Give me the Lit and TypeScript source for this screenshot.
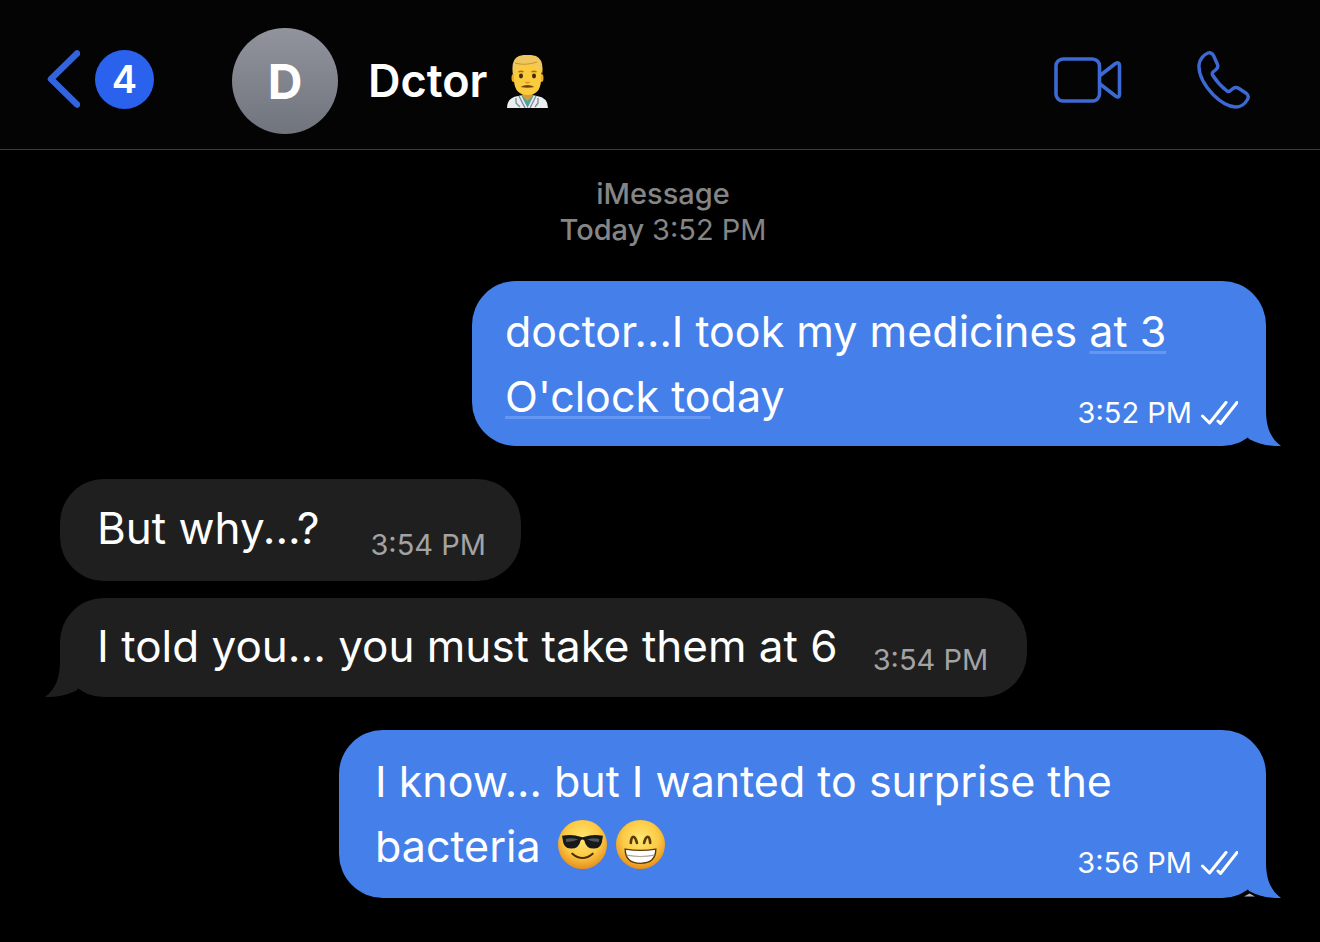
import { LitElement, html, css, svg, nothing } from "lit";
import { customElement, property } from "lit/decorators.js";

const coolFace = html`<svg class="emoji" viewBox="0 0 48 48" role="img" aria-label="smiling face with sunglasses">
  <defs>
    <radialGradient id="cool" cx="50%" cy="38%" r="62%">
      <stop offset="0" stop-color="#ffe871" /><stop offset=".6" stop-color="#fcc944" /><stop offset="1" stop-color="#e58f1c" />
    </radialGradient>
  </defs>
  <circle cx="24" cy="24" r="24" fill="url(#cool)" />
  <path d="M4 15.500Q14 13.500 22 16.500Q24 17.200 26 16.500Q34 13.500 44 15.500L43.500 18.500Q43 27.500 35.500 28Q27.500 28.300 25.800 20Q24 18 22.200 20Q20.500 28.300 12.500 28Q5 27.500 4.500 18.500Z" fill="#17191b" />
  <path d="M7.500 18.500Q13 16.800 20 19Q15 21 8 21.500ZM28.500 19Q35 16.800 40.500 18.500L40 21.500Q33 21 28.500 19Z" fill="#50565a" />
  <path d="M14 33Q24 41.500 34 33" fill="none" stroke="#4a2d05" stroke-width="2" stroke-linecap="round" />
</svg>`;

const grinFace = html`<svg class="emoji" viewBox="0 0 48 48" role="img" aria-label="beaming face with smiling eyes">
  <defs>
    <radialGradient id="grin" cx="50%" cy="38%" r="62%">
      <stop offset="0" stop-color="#ffe871" /><stop offset=".6" stop-color="#fcc944" /><stop offset="1" stop-color="#e58f1c" />
    </radialGradient>
  </defs>
  <circle cx="24" cy="24" r="24" fill="url(#grin)" />
  <path d="M14.500 22.500Q15 16.500 17 16.500Q19 16.500 20.500 22.500M27.500 22.500Q29 16.500 31 16.500Q33 16.500 33.500 22.500" fill="none" stroke="#5a3a08" stroke-width="2.600" stroke-linecap="round" />
  <path d="M9 28.500Q24 31 39 28.500Q39 42.500 24 42.500Q9 42.500 9 28.500Z" fill="#fff" stroke="#5a3a08" stroke-width="1.400" />
  <path d="M10.500 34.500Q24 37 37.500 34.500" fill="none" stroke="#a9a39b" stroke-width="1.200" />
</svg>`;

const doctorFace = html`<svg class="doctor" viewBox="0 0 41 53" role="img" aria-label="doctor">
  <path d="M0 53Q0 42.500 11 41L20.500 39L30 41Q41 42.500 41 53Z" fill="#e9eef2" />
  <path d="M14 40L20.500 53L27 40Z" fill="#58a09a" />
  <path d="M15.500 36H25.500V41L20.500 46L15.500 41Z" fill="#dc9b28" />
  <path d="M9 43V48L13 52M31 43V48L28 52M12 41L18 53M29 41L23 53" fill="none" stroke="#7d8790" stroke-width="1.300" />
  <ellipse cx="6.500" cy="23" rx="2" ry="4" fill="#e9a92c" />
  <ellipse cx="34.500" cy="23" rx="2" ry="4" fill="#e9a92c" />
  <path d="M7 13Q7 5 20.500 5Q34 5 34 13V26Q33 40 20.500 40Q8 40 7 26Z" fill="#fbcb3e" />
  <path d="M6 20Q3.500 4 12 1Q20 -1.500 29 1Q37.500 5 35 20L33 13Q28 9.500 24 10Q16 12 9 11Q8 13 8 18Z" fill="#f0c75f" />
  <path d="M8 8Q18 11 30 7" fill="none" stroke="#c9942e" stroke-width="1" />
  <path d="M11.500 17Q14 15.500 16.500 17M24.500 17Q27 15.500 29.500 17" fill="none" stroke="#a8721a" stroke-width="1.500" />
  <ellipse cx="14" cy="21" rx="2" ry="2.400" fill="#44290c" />
  <ellipse cx="27" cy="21" rx="2" ry="2.400" fill="#44290c" />
  <path d="M18.500 27Q20.500 28.500 22.500 27" fill="none" stroke="#d18b1c" stroke-width="1.300" />
  <path d="M13.500 32Q20.500 28 27.500 32Q20.500 33.500 13.500 32Z" fill="#6d4210" />
</svg>`;

@customElement("chat-bubble")
class ChatBubble extends LitElement {
  @property({ reflect: true }) side = "sent";
  @property({ reflect: true }) span = "wide";
  @property({ type: Boolean }) tail = false;
  @property({ type: Boolean }) glint = false;
  @property() time = "";

  static styles = css`
    :host {
      display: flow-root;
      position: relative;
      box-sizing: border-box;
      border-radius: 44px;
      color: #fff;
      line-height: 65px;
    }
    :host([side="sent"]) {
      align-self: flex-end;
      max-width: min(66%, 794px);
      padding: 18px 28px 17px 33px;
      background: #447fea;
      font-size: 43px;
    }
    :host([side="sent"][span="wide"]) {
      max-width: min(77%, 927px);
      padding: 19px 28px 19px 36px;
    }
    :host([side="received"]) {
      align-self: flex-start;
      padding: 16px 39px 18px 37px;
      background: #1f1f20;
      font-size: 44px;
    }
    :host([side="received"][span="short"]) {
      padding: 17px 35px 20px 37px;
    }
    .stamp {
      display: flex;
      align-items: center;
      float: right;
      gap: 9px;
      margin-top: 33px;
      font-size: 29px;
      line-height: 32px;
      white-space: nowrap;
    }
    :host([side="received"]) .stamp {
      margin-top: 30px;
      margin-left: 35px;
      color: #a3a3a5;
    }
    :host([side="received"][span="short"]) .stamp {
      margin-top: 33px;
      margin-left: 51px;
    }
    .ticks {
      width: 37px;
      height: 24px;
    }
    .tail {
      position: absolute;
      bottom: 0;
      width: 56px;
      height: 46px;
    }
    :host([side="sent"]) .tail {
      right: -16px;
      fill: #447fea;
    }
    :host([side="received"]) .tail {
      left: -16px;
      fill: #1f1f20;
      transform: scaleX(-1);
    }
  `;

  render() {
    return html`<slot></slot
      ><div class="stamp">
        <time>${this.time}</time>
        ${this.side === "sent"
          ? html`<svg class="ticks" viewBox="0 0 37 24" role="img" aria-label="Read">
              <path d="M1.500 15L8.500 22L25 1.500M17 20L19.500 22.500L36 1.500" fill="none" stroke="#fff" stroke-width="3" stroke-linecap="round" stroke-linejoin="round" />
            </svg>`
          : nothing}
      </div>
      ${this.tail
        ? html`<svg class="tail" viewBox="0 0 56 46" aria-hidden="true">
            <path d="M40 0V10C40 26 44 38 55 46C44 46.500 32 44 23 39L10 20L30 0Z" />
            ${this.glint ? svg`<path d="M18 44.500L23.500 41.500L29 44.500Z" fill="#aeb6c6" />` : nothing}
          </svg>`
        : nothing}`;
  }
}

@customElement("app-root")
class AppRoot extends LitElement {
  static styles = css`
    :host {
      display: flex;
      flex-direction: column;
      min-height: 100vh;
      background: #000;
      color: #fff;
      font-family: Inter, "Liberation Sans", sans-serif;
    }
    .bar {
      display: flex;
      align-items: center;
      padding: 28px 70px 15px 47px;
      border-bottom: 1px solid #3c3c3c;
      background: #040404;
    }
    button {
      display: flex;
      padding: 0;
      border: 0;
      background: none;
      color: inherit;
      font: inherit;
      cursor: pointer;
    }
    .back {
      align-items: center;
      gap: 15px;
      padding-bottom: 4px;
    }
    .chevron {
      width: 33px;
      height: 58px;
    }
    .count {
      display: grid;
      place-items: center;
      width: 59px;
      height: 59px;
      border-radius: 50%;
      background: #2a61ed;
      font-size: 38px;
      font-weight: 600;
    }
    .avatar {
      display: grid;
      place-items: center;
      width: 106px;
      height: 106px;
      margin-left: 78px;
      border-radius: 50%;
      background: linear-gradient(#92949d, #70747d);
      font-size: 48px;
      font-weight: 700;
    }
    .name {
      display: flex;
      align-items: center;
      gap: 20px;
      margin: 0 0 0 30px;
      font-size: 45px;
      font-weight: 600;
      line-height: 54px;
    }
    .doctor {
      width: 41px;
      height: 53px;
    }
    .actions {
      display: flex;
      align-items: center;
      gap: 75px;
      margin-left: auto;
      padding-bottom: 2px;
    }
    .video {
      width: 68px;
      height: 46px;
    }
    .phone {
      width: 53px;
      height: 58px;
    }
    .thread {
      display: flex;
      flex-direction: column;
      gap: 33px;
      padding: 26px 54px 44px 60px;
    }
    .day {
      margin: 0;
      color: #858585;
      font-size: 29px;
      font-weight: 500;
      line-height: 36px;
      text-align: center;
    }
    .clock {
      font-weight: 400;
    }
    .replies {
      display: flex;
      flex-direction: column;
      gap: 17px;
    }
    .event {
      color: inherit;
      text-decoration: underline 3px #6596f1;
      text-decoration-skip-ink: none;
      text-underline-offset: 4px;
    }
    .emoji {
      width: 49px;
      height: 49px;
      margin-right: 9px;
      vertical-align: -7px;
    }
    .faces {
      margin-left: 5px;
    }
  `;

  render() {
    return html`
      <header class="bar">
        <button class="back" aria-label="Back, 4 unread">
          <svg class="chevron" viewBox="0 0 33 58" aria-hidden="true">
            <path d="M30 3.500L4 29L30 54.500" fill="none" stroke="#3264e0" stroke-width="6.500" stroke-linecap="round" stroke-linejoin="round" />
          </svg>
          <span class="count">4</span>
        </button>
        <div class="avatar">D</div>
        <h1 class="name">Dctor ${doctorFace}</h1>
        <div class="actions">
          <button aria-label="Video call">
            <svg class="video" viewBox="0 0 68 46" fill="none" stroke="#3c69d4" stroke-width="3.600" stroke-linejoin="round">
              <rect x="2" y="2" width="43.500" height="42" rx="7" />
              <path d="M46 18.500L61.500 6.500Q65.500 4.500 65.500 8.500V37.500Q65.500 41.500 61.500 39L46 27" />
            </svg>
          </button>
          <button aria-label="Call">
            <svg class="phone" viewBox="0 0 53 58" fill="none" stroke="#3c69d4" stroke-width="3.400" stroke-linejoin="round">
              <path d="M2 14C2.500 8 7 3.500 11 2C13.500 1.200 15 2 16.500 4.500L20.500 13.500C21.500 16 20.500 17.500 18.500 19L16 21C15 22 15 23 15.800 24.500C20 31 25.500 36.500 30 40C31.500 41 32.500 40.800 33.500 39.500L36 37.500C38 36 40 36.300 42 37.500L49.500 42.500C51.500 44 51.700 46 50.500 48.500C48 53 43 56 38.500 56C31 55.500 23 50.500 16.500 44C8 35 1.500 24 2 14Z" />
            </svg>
          </button>
        </div>
      </header>
      <main class="thread">
        <p class="day">iMessage<br />Today <span class="clock">3:52 PM</span></p>
        <chat-bubble side="sent" span="medium" time="3:52 PM" tail
          >doctor...I took my medicines <a class="event" href="#event">at 3</a>
          <a class="event" href="#event">O'clock to</a>day</chat-bubble
        >
        <div class="replies">
          <chat-bubble side="received" span="short" time="3:54 PM">But why...?</chat-bubble>
          <chat-bubble side="received" time="3:54 PM" tail>I told you... you must take them at 6</chat-bubble>
        </div>
        <chat-bubble side="sent" time="3:56 PM" tail glint
          >I know... but I wanted to surprise the bacteria <span class="faces">${coolFace}${grinFace}</span></chat-bubble
        >
      </main>
    `;
  }
}
